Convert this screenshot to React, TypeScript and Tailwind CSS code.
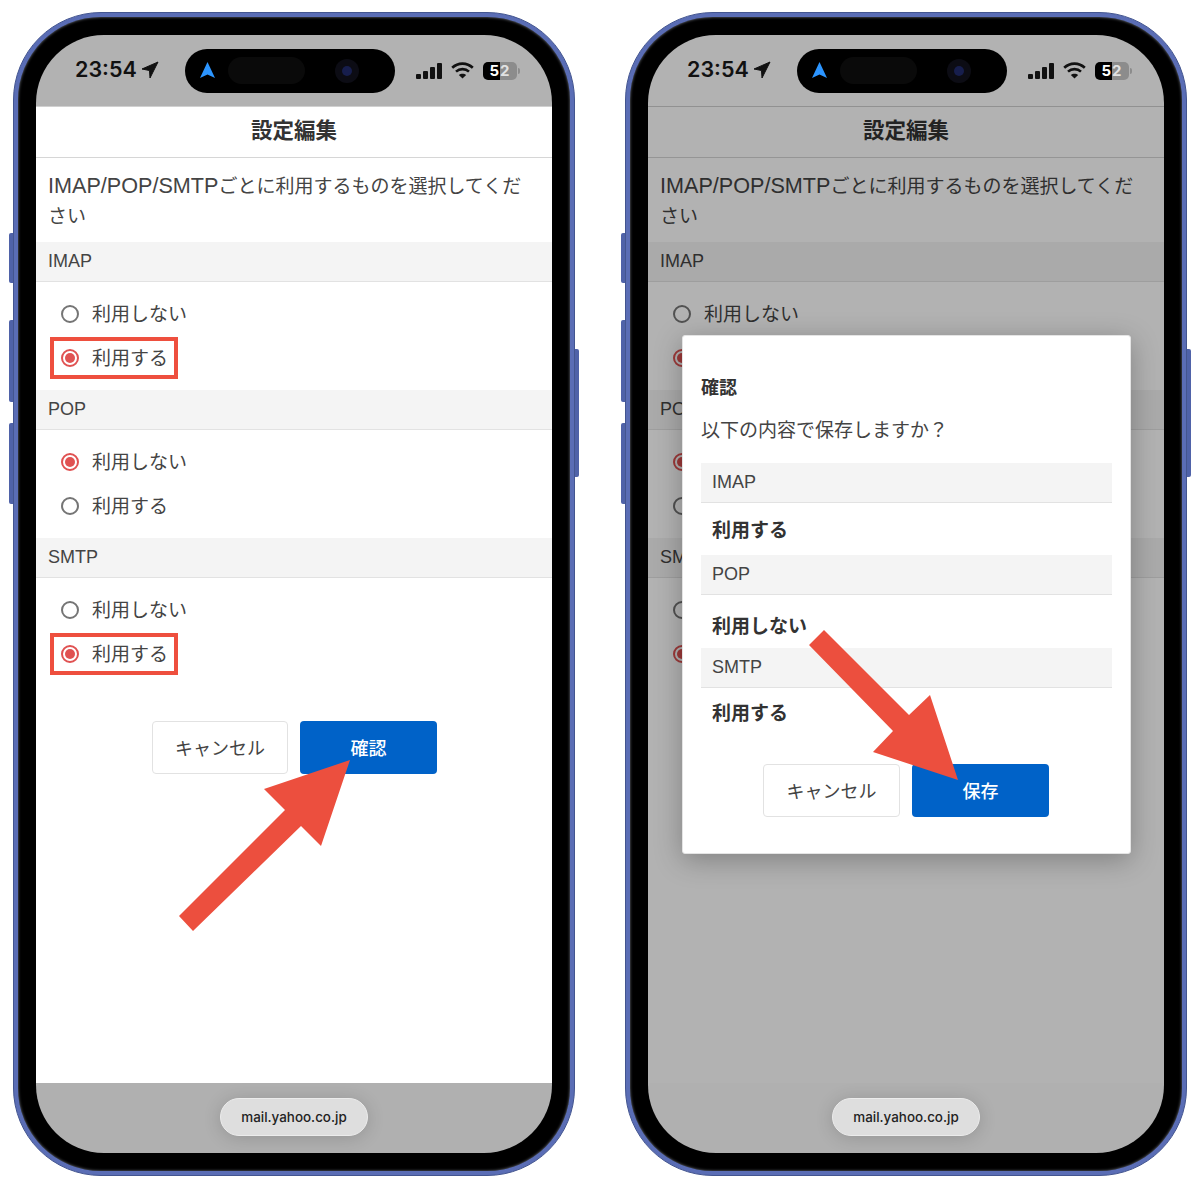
const options = [
  { name: 'IMAP', picked: 1 },
  { name: 'POP', picked: 0 },
  { name: 'SMTP', picked: 1 },
];

const labels = ['利用しない', '利用する'];

function Radio({ checked }: { checked: boolean }) {
  if (checked) {
    return (
      <span className="w-[18px] h-[18px] rounded-full border-2 border-[#e05252] flex items-center justify-center shrink-0">
        <span className="w-[10px] h-[10px] rounded-full bg-[#e05252]" />
      </span>
    );
  }
  return <span className="w-[18px] h-[18px] rounded-full border-2 border-[#757575] shrink-0" />;
}

function StatusBar() {
  return (
    <div className="h-[71px] bg-[#b2b2b2] flex items-center pl-[39px] shrink-0">
      <div className="w-[110px] flex items-center gap-[4px] pb-[1px]">
        <span className="font-['Inter',sans-serif] text-[21.5px] font-semibold text-[#111] leading-none">23:54</span>
        <svg width="18" height="18" viewBox="0 0 18 18">
          <path d="M17 1 L9 17 L8.5 9.5 L1 8 Z" fill="#111" stroke="#111" strokeLinejoin="round" />
        </svg>
      </div>

      {/* Dynamic island */}
      <div className="w-[210px] h-[44px] rounded-[22px] bg-black flex items-center pl-[15px] shrink-0">
        <svg width="15" height="17" viewBox="0 0 15 17" className="shrink-0">
          <path d="M7.5 0 L15 16 L7.5 12.5 L0 16 Z" fill="#2c95ff" />
        </svg>
        <div className="w-[77px] h-[27px] rounded-[14px] bg-[#0a0a0a] ml-[13px]" />
        <div className="w-[24px] h-[24px] rounded-full bg-[#0c0c14] ml-[30px] flex items-center justify-center">
          <div className="w-[10px] h-[10px] rounded-full bg-[#171e4d]" />
        </div>
      </div>

      <div className="flex items-end gap-[2px] ml-[21px] h-[16px]">
        <div className="w-[5px] h-[5px] rounded-[1px] bg-[#111]" />
        <div className="w-[5px] h-[8px] rounded-[1px] bg-[#111]" />
        <div className="w-[5px] h-[12px] rounded-[1px] bg-[#111]" />
        <div className="w-[5px] h-[16px] rounded-[1px] bg-[#111]" />
      </div>
      <svg width="23" height="17" viewBox="0 0 23 17" className="ml-[9px]" fill="none" stroke="#111" strokeWidth="2.6">
        <path d="M1.2 5.8 C7 0.2 16 0.2 21.8 5.8" />
        <path d="M5 9.6 C8.6 6.3 14.4 6.3 18 9.6" />
        <path d="M11.5 16.5 L7.8 12.9 C9.8 11.2 13.2 11.2 15.2 12.9 Z" fill="#111" stroke="none" />
      </svg>
      <div className="flex items-center ml-[9px]">
        <div className="w-[34px] h-[18px] rounded-[5px] overflow-hidden flex font-['Inter',sans-serif] text-[15px] font-bold leading-none">
          <span className="w-[17px] bg-black text-white flex items-center justify-end pr-[1px]">5</span>
          <span className="w-[17px] bg-[#8c8c8c] text-[#e2e2e2] flex items-center">2</span>
        </div>
        <div className="w-[2px] h-[6px] rounded-r-[2px] bg-[#8c8c8c] ml-[1px]" />
      </div>
    </div>
  );
}

function Content() {
  return (
    <div className="flex-1 bg-white border-t border-[#d0d0d0]">
      <div className="h-[51px] pb-[2px] border-b border-[#d6d6d6] flex items-center justify-center text-[21.5px] font-bold text-[#333]">
        設定編集
      </div>
      <div className="px-[12px] pt-[13px] h-[84px] text-[19px] leading-[29.5px] text-[#444]">
        <span className="text-[21.6px]">IMAP/POP/SMTP</span>ごとに利用するものを選択してください
      </div>
      {options.map((group) => (
        <div key={group.name}>
          <div className="h-[40px] bg-[#f4f4f4] border-b border-[#e2e2e2] px-[12px] flex items-center text-[18px] text-[#444]">
            {group.name}
          </div>
          <div className="py-[10px]">
            {labels.map((label, i) => (
              <div key={label} className="h-[44px] flex items-center pl-[25px] gap-[13px] text-[19px] text-[#444]">
                <Radio checked={group.picked === i} />
                <span className="pt-[2px]">{label}</span>
              </div>
            ))}
          </div>
        </div>
      ))}
      <div className="flex justify-center gap-[12px] mt-[35px] pl-[1px]">
        <div className="w-[136px] h-[53px] pt-[4px] rounded-[4px] border border-[#e2e2e2] bg-white flex items-center justify-center text-[18px] text-[#444]">
          キャンセル
        </div>
        <div className="w-[137px] h-[53px] pt-[4px] rounded-[4px] bg-[#0062c8] flex items-center justify-center text-[18px] font-medium text-white">
          確認
        </div>
      </div>
    </div>
  );
}

function BottomBar() {
  return (
    <div className="h-[70px] bg-[#b0b0b0] flex justify-center pt-[15px] shrink-0">
      <div className="w-[148px] h-[38px] rounded-[19px] bg-[#dedede] border border-[#ececec] shadow-[0_2px_18px_rgba(0,0,0,0.16)] flex items-center justify-center text-[13.4px] font-medium font-['Inter',sans-serif] text-[#222]">
        mail.yahoo.co.jp
      </div>
    </div>
  );
}

function SummaryHead({ children }: { children: string }) {
  return (
    <div className="h-[40px] bg-[#f4f4f4] border-b border-[#e2e2e2] px-[11px] flex items-center text-[18px] text-[#444]">
      {children}
    </div>
  );
}

function Dialog() {
  return (
    <div className="absolute left-[34px] top-[300px] w-[449px] h-[519px] bg-white rounded-[3px] border border-[#e4e4e4] shadow-[0_6px_28px_rgba(0,0,0,0.28)] px-[18px] pt-[39px]">
      <div className="h-[26px] flex items-center text-[18px] font-bold text-[#333]">確認</div>
      <div className="h-[30px] mt-[13px] pt-[4px] flex items-center text-[19px] text-[#444]">以下の内容で保存しますか？</div>
      <div className="mt-[19px]">
        <SummaryHead>IMAP</SummaryHead>
        <div className="h-[52px] pt-[4px] flex items-center px-[11px] text-[19px] font-bold text-[#333]">利用する</div>
        <SummaryHead>POP</SummaryHead>
        <div className="h-[53px] pt-[11px] flex items-center px-[11px] text-[19px] font-bold text-[#333]">利用しない</div>
        <SummaryHead>SMTP</SummaryHead>
        <div className="h-[50px] pt-[3px] flex items-center px-[11px] text-[19px] font-bold text-[#333]">利用する</div>
      </div>
      <div className="flex justify-center gap-[12px] mt-[26px] pr-[1px]">
        <div className="w-[137px] h-[53px] pt-[4px] rounded-[4px] border border-[#e2e2e2] bg-white flex items-center justify-center text-[18px] text-[#444]">
          キャンセル
        </div>
        <div className="w-[137px] h-[53px] pt-[4px] rounded-[4px] bg-[#0062c8] flex items-center justify-center text-[18px] font-medium text-white">
          保存
        </div>
      </div>
    </div>
  );
}

function Phone({ confirm }: { confirm?: boolean }) {
  return (
    <div className="relative w-[562px] h-[1164px] shrink-0">
      {/* Side buttons */}
      <div className="absolute left-[-4px] top-[221px] w-[6px] h-[50px] rounded-l-[2px] bg-[#4f62a8]" />
      <div className="absolute left-[-4px] top-[308px] w-[6px] h-[82px] rounded-l-[2px] bg-[#4f62a8]" />
      <div className="absolute left-[-4px] top-[411px] w-[6px] h-[81px] rounded-l-[2px] bg-[#4f62a8]" />
      <div className="absolute right-[-4px] top-[337px] w-[6px] h-[128px] rounded-r-[2px] bg-[#4f62a8]" />

      <div className="relative w-full h-full rounded-[88px] border border-[#43558f] bg-[#5a6db5] p-[4px]">
        <div className="w-full h-full rounded-[83px] bg-black p-[18px] shadow-[inset_0_0_3px_rgba(170,175,190,0.7)]">
          <div className="relative w-full h-full rounded-[68px] overflow-hidden flex flex-col">
            <StatusBar />
            <Content />
            <BottomBar />
            {confirm && (
              <>
                <div className="absolute left-0 right-0 top-[71px] bottom-[70px] bg-black/30" />
                <Dialog />
              </>
            )}
            {!confirm && (
              <>
                <div className="absolute left-[14px] top-[302px] w-[128px] h-[42px] border-[4px] border-[#ee4f3e]" />
                <div className="absolute left-[14px] top-[598px] w-[128px] h-[42px] border-[4px] border-[#ee4f3e]" />
              </>
            )}
          </div>
        </div>
      </div>
    </div>
  );
}

export default function App() {
  return (
    <div className="relative w-[1200px] h-[1188px] bg-white font-['Liberation_Sans','Noto_Sans_CJK_JP',sans-serif] overflow-hidden">
      <div className="flex gap-[50px] pl-[13px] pt-[12px]">
        <Phone />
        <Phone confirm />
      </div>

      {/* Annotation arrows */}
      <svg className="absolute inset-0 pointer-events-none" width="1200" height="1188" viewBox="0 0 1200 1188">
        <path d="M350 760 L264 789 L285 810 L179 916 L193 931 L301 826 L321 846 Z" fill="#ec4f3e" />
        <path d="M824 630 L809 645 L893 731 L873 752 L958 780 L930 695 L909 715 Z" fill="#ec4f3e" />
      </svg>
    </div>
  );
}
